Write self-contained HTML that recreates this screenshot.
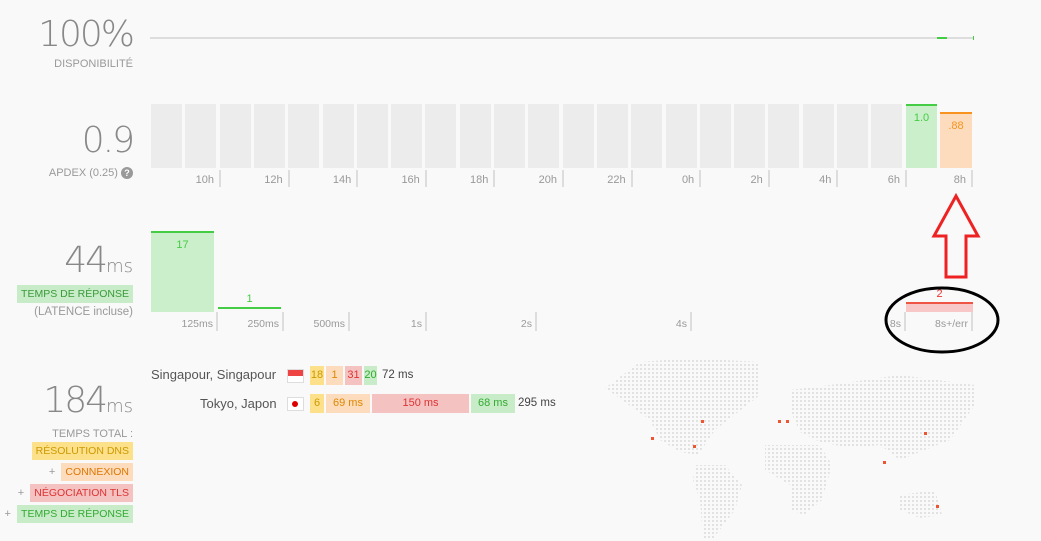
<!DOCTYPE html>
<html><head><meta charset="utf-8"><style>
body{margin:0;width:1041px;height:541px;background:#f9f9f9;font-family:"Liberation Sans",sans-serif;position:relative;overflow:hidden;color:#555}
.a{position:absolute}
.big{position:absolute;right:908px;font-family:"DejaVu Sans ExtraLight","DejaVu Sans",sans-serif;font-weight:200;color:#888;font-size:36px;letter-spacing:-2px;white-space:nowrap}
.big small{font-size:18px;letter-spacing:0}
.lbl{position:absolute;right:908px;font-size:11px;color:#999;white-space:nowrap;text-align:right}
.col{position:absolute;top:104px;height:64px;width:31px;background:#ececec}
.tick{position:absolute;width:2px;background:#ddd}
.tl{position:absolute;font-size:11px;color:#999;text-align:right;width:60px}
.badge{display:inline-block;padding:3px 4px;font-size:10.5px}
.seg{position:absolute;height:19px;font-size:11px;line-height:19px;text-align:center}
</style></head><body>
<div class="big" style="top:14px">100%</div>
<div class="lbl" style="top:58px">DISPONIBILITÉ</div>
<div class="a" style="left:150px;top:37px;width:823px;height:2px;background:#ddd"></div>
<div class="a" style="left:937px;top:37px;width:10px;height:2px;background:#4c4"></div>
<div class="a" style="left:973px;top:36px;width:1px;height:4px;background:#4c4"></div>

<div class="big" style="top:120px">0.9</div>
<div class="lbl" style="top:167px">APDEX (0.25) <span style="display:inline-block;width:12px;height:12px;border-radius:6px;background:#999;color:#fff;font-size:9px;line-height:12px;text-align:center;font-weight:bold">?</span></div>
<div id="cols"></div>
<script>
var h='';for(var i=0;i<22;i++){h+='<div class="col" style="left:'+(151+i*34.3)+'px"></div>';}
var labels=['10h','12h','14h','16h','18h','20h','22h','0h','2h','4h','6h','8h'];
for(var j=0;j<12;j++){var x=219+j*68.6;if(j==11)x=971;h+='<div class="tick" style="left:'+x+'px;top:170px;height:17px"></div><div class="tl" style="left:'+(x-65)+'px;top:174px">'+labels[j]+'</div>';}
document.getElementById('cols').innerHTML=h;
</script>
<div class="a" style="left:906px;top:104px;width:31px;height:64px;background:#cbefcb;border-top:2px solid #4c4;box-sizing:border-box;text-align:center;color:#4c4;font-size:11px;padding-top:6px">1.0</div>
<div class="a" style="left:940px;top:112px;width:32px;height:56px;background:#fddcbd;border-top:2px solid #f7931e;box-sizing:border-box;text-align:center;color:#f7931e;font-size:11px;padding-top:6px">.88</div>

<div class="big" style="top:240px">44<small>ms</small></div>
<div class="lbl" style="top:285px"><span class="badge" style="background:#c8ecc8;color:#3a9a3a">TEMPS DE RÉPONSE</span></div>
<div class="lbl" style="top:306px;font-size:11.5px">(LATENCE incluse)</div>
<div class="a" style="left:151px;top:231px;width:63px;height:81px;background:#cbefcb;border-top:2px solid #4c4;box-sizing:border-box;text-align:center;color:#4c4;font-size:11px;padding-top:6px">17</div>
<div class="a" style="left:218px;top:307px;width:63px;height:2px;background:#4c4"></div>
<div class="a" style="left:218px;top:293px;width:63px;text-align:center;color:#4c4;font-size:11px">1</div>
<div class="a" style="left:906px;top:302px;width:67px;height:10px;background:#f8c8c8;border-top:2px solid #e54;box-sizing:border-box"></div>
<div class="a" style="left:906px;top:288px;width:67px;text-align:center;color:#e33;font-size:11px">2</div>
<div id="t2"></div>
<script>
var t=[[216,'125ms'],[282,'250ms'],[348,'500ms'],[425,'1s'],[535,'2s'],[690,'4s'],[904,'8s'],[971,'8s+/err']];h='';
t.forEach(function(p){h+='<div class="tick" style="left:'+p[0]+'px;top:312px;height:19px"></div><div class="tl" style="left:'+(p[0]-63)+'px;top:318px;font-size:10.5px">'+p[1]+'</div>';});
document.getElementById('t2').innerHTML=h;
</script>

<div class="a" style="left:151px;top:367px;font-size:13px;color:#555">Singapour, Singapour</div>
<div class="a" style="left:287px;top:369px;width:15px;height:12px;border:1px solid #ddd;background:linear-gradient(#ee4444 50%,#fff 50%)"></div>
<div class="seg" style="left:310px;top:366px;width:14px;background:#fde08a;color:#c90">18</div>
<div class="seg" style="left:326px;top:366px;width:17px;background:#fddcbd;color:#d80">1</div>
<div class="seg" style="left:345px;top:366px;width:17px;background:#f5c2c2;color:#d33">31</div>
<div class="seg" style="left:364px;top:366px;width:13px;background:#c8ecc8;color:#3a3">20</div>
<div class="a" style="left:382px;top:369px;font-size:11.5px;color:#444">72 ms</div>

<div class="a" style="left:200px;top:396px;font-size:13px;color:#555">Tokyo, Japon</div>
<div class="a" style="left:287px;top:397px;width:15px;height:12px;border:1px solid #ddd;background:#fff"><div style="width:6px;height:6px;border-radius:3px;background:#d00;margin:3px 4px"></div></div>
<div class="seg" style="left:310px;top:394px;width:14px;background:#fde08a;color:#c90">6</div>
<div class="seg" style="left:326px;top:394px;width:44px;background:#fddcbd;color:#d80">69 ms</div>
<div class="seg" style="left:372px;top:394px;width:97px;background:#f5c2c2;color:#d33">150 ms</div>
<div class="seg" style="left:471px;top:394px;width:44px;background:#c8ecc8;color:#3a3">68 ms</div>
<div class="a" style="left:518px;top:397px;font-size:11.5px;color:#444">295 ms</div>

<div class="big" style="top:380px">184<small>ms</small></div>
<div class="lbl" style="top:428px">TEMPS TOTAL :</div>
<div class="lbl" style="top:442px"><span class="badge" style="background:#fde08a;color:#c90">RÉSOLUTION DNS</span></div>
<div class="lbl" style="top:463px">+ &nbsp;<span class="badge" style="background:#fddcbd;color:#d70">CONNEXION</span></div>
<div class="lbl" style="top:484px">+ &nbsp;<span class="badge" style="background:#f5c2c2;color:#d33">NÉGOCIATION TLS</span></div>
<div class="lbl" style="top:505px">+ &nbsp;<span class="badge" style="background:#c8ecc8;color:#3a3">TEMPS DE RÉPONSE</span></div>

<svg class="a" style="left:0;top:0" width="1041" height="541">
<defs><pattern id="d" width="4" height="4" patternUnits="userSpaceOnUse"><rect width="2" height="2" fill="#e2e2e2"/></pattern></defs>
<g fill="url(#d)">
<polygon points="605,388 640,362 690,358 760,362 760,395 715,430 698,455 680,452 660,440 650,420 615,395"/>
<polygon points="695,465 725,465 742,485 735,510 712,540 703,540 700,500 693,480"/>
<polygon points="790,390 830,385 900,375 975,385 975,405 950,440 920,452 900,460 880,445 850,448 820,442 800,432 790,410"/>
<polygon points="765,445 820,445 832,465 822,500 804,515 792,510 790,485 765,470"/>
<polygon points="900,495 935,490 942,515 920,518 900,510"/>
</g>
<g fill="#e53">
<rect x="651" y="437" width="3" height="3"/><rect x="701" y="420" width="3" height="3"/><rect x="693" y="445" width="3" height="3"/><rect x="778" y="420" width="3" height="3"/><rect x="786" y="420" width="3" height="3"/><rect x="924" y="432" width="3" height="3"/><rect x="883" y="461" width="3" height="3"/><rect x="936" y="505" width="3" height="3"/>
</g>
<polygon points="956,196 978,236 966,236 966,277 946,277 946,236 934,236" fill="none" stroke="#e22" stroke-width="3"/>
<ellipse cx="942" cy="320" rx="56" ry="32" fill="none" stroke="#000" stroke-width="3"/>
</svg>
</body></html>
